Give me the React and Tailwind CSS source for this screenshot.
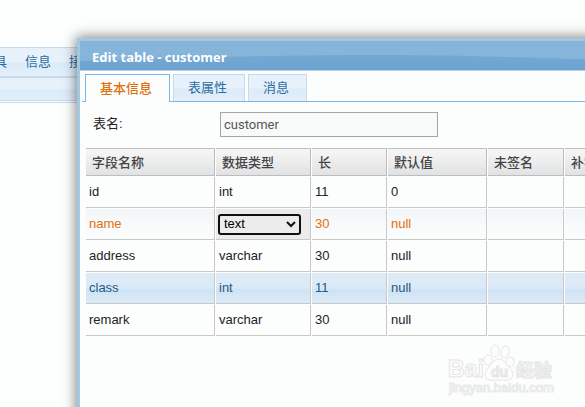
const columns = [
  { label: '字段名称', width: 'w-[129px]' },
  { label: '数据类型', width: 'w-[95px]' },
  { label: '长', width: 'w-[75px]' },
  { label: '默认值', width: 'w-[99px]' },
  { label: '未签名', width: 'w-[76px]' },
  { label: '补零', width: 'w-[76px]' },
];

const rows = [
  { name: 'id', type: 'int', length: '11', initial: '0' },
  { name: 'name', type: 'text', length: '30', initial: 'null', state: 'editing' },
  { name: 'address', type: 'varchar', length: '30', initial: 'null' },
  { name: 'class', type: 'int', length: '11', initial: 'null', state: 'hover' },
  { name: 'remark', type: 'varchar', length: '30', initial: 'null' },
];

const rowStyles = {
  editing: 'text-[#e17009] bg-gradient-to-b from-[#f3f6f9] to-[#fcfdfd]',
  hover: 'text-[#1d5987] bg-[linear-gradient(#dfecf8_0%,#dbe9f6_50%,#cfe3f4_55%,#dbeaf6_100%)]',
  plain: 'text-[#222222]',
};

const bar = 'bg-[linear-gradient(#e6f1fb_0%,#e7f2fc_50%,#dbebf9_54%,#e3effa_100%)]';

function Row({ row }) {
  const cell = `h-[31px] border-r border-b border-[#c8c8c8] px-[3px] text-left ${rowStyles[row.state || 'plain']}`;
  return (
    <tr>
      <td className={cell}>{row.name}</td>
      {row.state === 'editing' ? (
        <td className="h-[31px] border-r border-b border-[#c8c8c8] bg-[#ebebeb] px-[2px]">
          <div className="relative w-[83px]">
            <select
              aria-label="数据类型"
              defaultValue="text"
              className="block h-[21px] w-full appearance-none rounded-[3px] border-2 border-[#101010] bg-[#ececec] px-1 text-[13px] leading-4 text-black outline-none"
            >
              <option>text</option>
              <option>int</option>
              <option>varchar</option>
            </select>
            <svg className="pointer-events-none absolute top-[7px] right-[5px]" width="10" height="7" viewBox="0 0 10 7" fill="none" stroke="#111" strokeWidth="2">
              <path d="M1 1l4 4 4-4" />
            </svg>
          </div>
        </td>
      ) : (
        <td className={cell}>{row.type}</td>
      )}
      <td className={cell}>{row.length}</td>
      <td className={cell}>{row.initial}</td>
      <td className={cell} />
      <td className={cell} />
    </tr>
  );
}

function Watermark() {
  return (
    <svg
      className="pointer-events-none absolute right-[30px] bottom-[10px]"
      width="108"
      height="54"
      viewBox="0 0 108 54"
      fill="#fdfdfd"
      stroke="#e4e5e6"
      strokeWidth="1"
      aria-hidden="true"
    >
      <g className="font-['Liberation_Sans','Noto_Sans_CJK_SC',sans-serif] font-bold">
        <text x="1" y="34" fontSize="23">Bai</text>
        <ellipse cx="41" cy="17" rx="4" ry="5" />
        <ellipse cx="48" cy="8" rx="4" ry="6" />
        <ellipse cx="58" cy="9" rx="4" ry="6" transform="rotate(12 58 9)" />
        <ellipse cx="63" cy="19" rx="4" ry="5" transform="rotate(15 63 19)" />
        <path d="M52 16c5 0 7 5 10 8 4 4 5 9 2 12-3 2-8 1-12 1s-9 1-12-1c-3-3-2-8 2-12 3-3 5-8 10-8z" />
        <text x="44" y="34" fontSize="14" fill="#f0f1f2">du</text>
        <text x="69" y="34" fontSize="18" fill="#f6f7f7">经验</text>
        <text x="2" y="49" fontSize="13" fill="#f6f7f7" stroke="#e9eaeb" className="font-normal">jingyan.baidu.com</text>
      </g>
    </svg>
  );
}

export default function App() {
  return (
    <div className="relative h-screen overflow-hidden bg-[#fdfefe] font-['Liberation_Sans','Noto_Sans_CJK_SC',sans-serif] text-[13px] leading-5">
      <div className="pt-[47px]">
        <nav className={`flex h-[29px] items-center gap-[18px] border-t border-[#c5dbec] text-[#2e6e9e] ${bar}`}>
          <a href="#tools" className="-ml-[19px]">工具</a>
          <a href="#info">信息</a>
          <a href="#api">接口</a>
        </nav>
        <div className={`h-[25px] border-t-2 border-b border-[#c5dbec] ${bar}`} />
        <div className="mt-px h-px bg-[#c5dbec]" />
      </div>

      <section
        role="dialog"
        aria-labelledby="dialog-title"
        className="absolute top-[38px] -right-[100px] -bottom-[100px] left-[77px] border-3 border-[#a3c8e0] bg-[#fcfdfd] shadow-[0_0_12px_1px_rgba(0,0,0,0.5)]"
      >
        <header className="relative flex h-[30px] items-center border-b border-[#b8d3e8] bg-[#87b4d9] px-3">
          <svg className="absolute inset-0 h-full w-full" viewBox="0 0 605 29" preserveAspectRatio="none" aria-hidden="true">
            <defs>
              <linearGradient id="wave" x1="0" y1="0" x2="0" y2="1">
                <stop offset="0" stopColor="#72a9d4" />
                <stop offset="1" stopColor="#6ca2d0" />
              </linearGradient>
            </defs>
            <path d="M0 20C100 17 200 14 305 14C390 14 450 17 605 21V29H0z" fill="url(#wave)" />
          </svg>
          <h1 id="dialog-title" className="relative pt-[2px] font-['Open_Sans',sans-serif] font-bold text-white">
            Edit table - customer
          </h1>
        </header>

        <div role="tablist" className="mx-[2px] flex gap-[3px] border-b border-b-[#79b7e7] px-[3px] pt-[3px]">
          <button role="tab" aria-selected="true" className="-mb-px h-[28px] w-[85px] border border-b-0 border-[#79b7e7] bg-[#fcfdfd] px-[14px] text-left font-medium text-[#e17009]">
            基本信息
          </button>
          <button role="tab" aria-selected="false" className={`h-[27px] w-[72px] border border-b-0 border-[#c5dbec] px-[14px] text-left text-[#2e6e9e] ${bar}`}>
            表属性
          </button>
          <button role="tab" aria-selected="false" className={`h-[27px] w-[59px] border border-b-0 border-[#c5dbec] px-[14px] text-left text-[#2e6e9e] ${bar}`}>
            消息
          </button>
        </div>

        <div className="flex h-[45px] items-center px-[13px] pb-px">
          <label htmlFor="table-name" className="w-[127px] text-[#222222]">表名:</label>
          <input
            id="table-name"
            defaultValue="customer"
            className="h-[25px] w-[218px] border border-[#a5a5a5] bg-[#f8f9f9] px-[3px] font-['Roboto',sans-serif] text-[#555555] outline-none"
          />
        </div>

        <table className="ml-[5px] w-[557px] table-fixed border-separate border-spacing-px">
          <thead>
            <tr>
              {columns.map((column) => (
                <th
                  key={column.label}
                  scope="col"
                  className={`h-[28px] border-t border-r border-b border-[#bdbdbd] bg-gradient-to-b from-[#f7f7f7] to-[#e1e2e3] px-[6px] pt-[2px] text-left font-medium text-[#444444] ${column.width}`}
                >
                  {column.label}
                </th>
              ))}
            </tr>
          </thead>
          <tbody>
            {rows.map((row) => (
              <Row key={row.name} row={row} />
            ))}
          </tbody>
        </table>
      </section>

      <Watermark />
    </div>
  );
}
